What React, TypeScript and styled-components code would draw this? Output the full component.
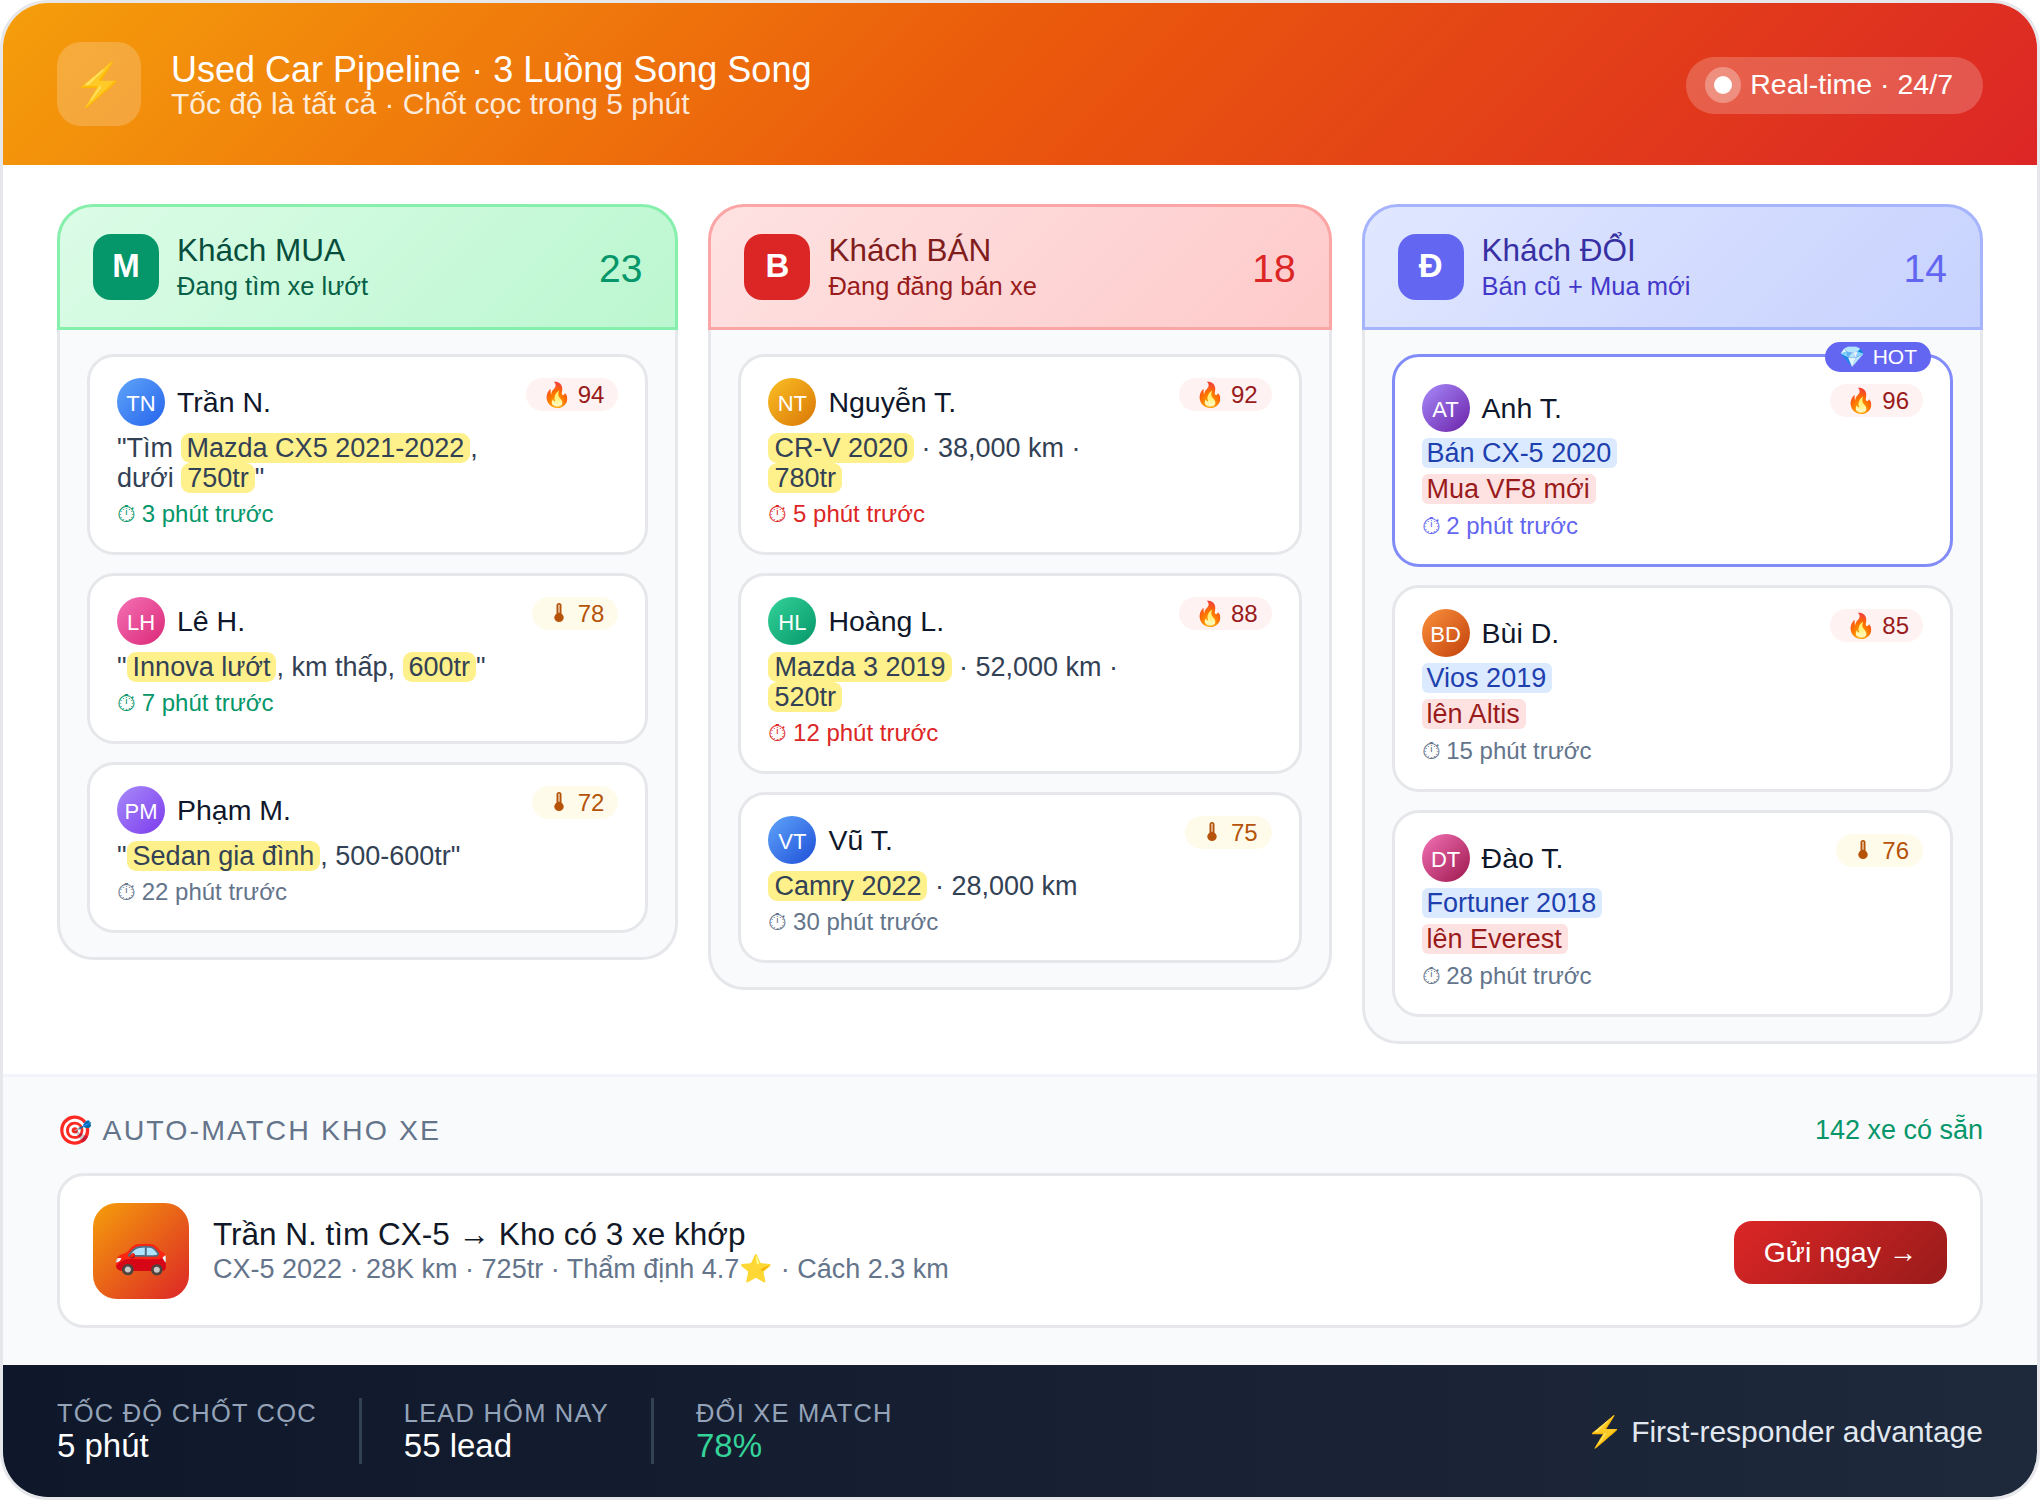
import React from "react";
import styled, { createGlobalStyle } from "styled-components";

const Global = createGlobalStyle`
  * { box-sizing: border-box; }
  html, body { margin: 0; padding: 0; background: #fff; }
  body { font-family: "Liberation Sans", Arial, sans-serif; }
`;

const Frame = styled.div`
  width: 2040px;
  height: 1500px;
  border: 3px solid #e5e7eb;
  border-radius: 48px;
  overflow: hidden;
  background: #fff;
  display: flex;
  flex-direction: column;
`;

const Header = styled.header`
  flex: none;
  height: 162px;
  padding: 0 54px;
  display: flex;
  align-items: center;
  gap: 30px;
  background: linear-gradient(135deg, #f59e0b 0%, #ea580c 50%, #dc2626 100%);
`;

const Bolt = styled.div`
  width: 84px;
  height: 84px;
  border-radius: 24px;
  background: rgba(255, 255, 255, 0.2);
  display: flex;
  align-items: center;
  justify-content: center;
  font-size: 42px;
`;

const HeaderText = styled.div`
  flex: 1;
  display: flex;
  flex-direction: column;
`;

const Title = styled.div`
  font-size: 36px;
  line-height: 40px;
  color: #fff;
`;

const Subtitle = styled.div`
  font-size: 30px;
  line-height: 30px;
  margin-top: -1px;
  color: rgba(255, 255, 255, 0.85);
`;

const LivePill = styled.div`
  height: 57px;
  margin-top: 3px;
  padding: 0 30px 2px 28px;
  border-radius: 30px;
  background: rgba(255, 255, 255, 0.2);
  display: flex;
  align-items: center;
  gap: 18px;
  color: #fff;
  font-size: 28.5px;
`;

const LiveDot = styled.span`
  width: 18px;
  height: 18px;
  border-radius: 50%;
  background: #fff;
  box-shadow: 0 0 0 9px rgba(255, 255, 255, 0.3);
`;

const Pipeline = styled.section`
  flex: 1;
  padding: 39px 54px 0;
  display: grid;
  grid-template-columns: 621.4px 623.2px 1fr;
  gap: 30px;
  align-items: start;
`;

type Tone = "buy" | "sell" | "swap";

const toneHead: Record<Tone, { a: string; b: string; border: string; title: string; sub: string; accent: string }> = {
  buy: { a: "#dcfce7", b: "#bbf7d0", border: "#86efac", title: "#064e3b", sub: "#065f46", accent: "#059669" },
  sell: { a: "#fee2e2", b: "#fecaca", border: "#fca5a5", title: "#7f1d1d", sub: "#991b1b", accent: "#dc2626" },
  swap: { a: "#e0e7ff", b: "#c7d2fe", border: "#a5b4fc", title: "#3730a3", sub: "#4338ca", accent: "#6366f1" },
};

const Column = styled.div`
  display: flex;
  flex-direction: column;
`;

const ColumnHead = styled.div<{ $tone: Tone }>`
  height: 126px;
  padding: 0 33px;
  display: flex;
  align-items: center;
  gap: 18px;
  border: 3px solid ${(p) => toneHead[p.$tone].border};
  border-radius: 36px 36px 0 0;
  background: linear-gradient(135deg, ${(p) => toneHead[p.$tone].a}, ${(p) => toneHead[p.$tone].b});
`;

const Letter = styled.div<{ $tone: Tone }>`
  width: 66px;
  height: 66px;
  padding-bottom: 2px;
  border-radius: 18px;
  background: ${(p) => toneHead[p.$tone].accent};
  color: #fff;
  font-size: 33px;
  font-weight: 700;
  display: flex;
  align-items: center;
  justify-content: center;
`;

const HeadText = styled.div`
  flex: 1;
  margin-top: -2px;
`;

const HeadTitle = styled.div<{ $tone: Tone }>`
  font-size: 31.5px;
  line-height: 40px;
  color: ${(p) => toneHead[p.$tone].title};
`;

const HeadSub = styled.div<{ $tone: Tone }>`
  font-size: 25.5px;
  line-height: 32px;
  color: ${(p) => toneHead[p.$tone].sub};
`;

const Count = styled.div<{ $tone: Tone }>`
  font-size: 39px;
  margin-top: 3px;
  color: ${(p) => toneHead[p.$tone].accent};
`;

const ColumnBody = styled.div`
  padding: 24px 27px 24px;
  display: flex;
  flex-direction: column;
  gap: 18px;
  background: #f9fafb;
  border: 3px solid #e5e7eb;
  border-top: 0;
  border-radius: 0 0 36px 36px;
`;

const Card = styled.article<{ $hot?: boolean }>`
  position: relative;
  padding: ${(p) => (p.$hot ? "27px 27px 23px" : "21px 27px 23px")};
  background: #fff;
  border: 3px solid ${(p) => (p.$hot ? "#818cf8" : "#e5e7eb")};
  border-radius: 27px;
`;

const HotBadge = styled.div`
  position: absolute;
  top: -15px;
  right: 19px;
  height: 30px;
  padding: 0 14px;
  border-radius: 15px;
  background: #6366f1;
  color: #fff;
  font-size: 21px;
  display: flex;
  align-items: center;
  gap: 8px;
`;

const CardHead = styled.div`
  display: flex;
  align-items: flex-start;
  justify-content: space-between;
  margin-bottom: 6px;
`;

const Person = styled.div`
  display: flex;
  align-items: center;
  gap: 12px;
`;

const Avatar = styled.div<{ $from: string; $to: string }>`
  width: 48px;
  height: 48px;
  border-radius: 50%;
  background: linear-gradient(135deg, ${(p) => p.$from}, ${(p) => p.$to});
  color: #fff;
  font-size: 22px;
  padding-top: 3px;
  display: flex;
  align-items: center;
  justify-content: center;
`;

const Name = styled.div`
  font-size: 28.5px;
  color: #0f172a;
`;

const Heat = styled.div<{ $warm?: boolean }>`
  height: 33px;
  padding: 0 14px 0 ${(p) => (p.$warm ? 22 : 16)}px;
  border-radius: 17px;
  background: ${(p) => (p.$warm ? "#fffbeb" : "#fef2f2")};
  color: ${(p) => (p.$warm ? "#b45309" : "#991b1b")};
  font-size: 24px;
  display: flex;
  align-items: center;
  gap: ${(p) => (p.$warm ? 14 : 6)}px;
`;

const ThermoIcon = styled.svg`
  width: 10px;
  height: 19px;
  margin-bottom: 3px;
  fill: currentColor;
`;

const Quote = styled.div`
  max-width: 380px;
  padding-top: 1px;
  font-size: 27px;
  line-height: 30px;
  color: #334155;
`;

const Mark = styled.span`
  padding: 0 6px;
  border-radius: 9px;
  background: #fef08a;
`;

const Tags = styled.div`
  display: flex;
  flex-direction: column;
  align-items: flex-start;
  gap: 6px;
  padding-bottom: 1px;
`;

const Tag = styled.span<{ $kind: "sell" | "buy" }>`
  height: 30px;
  line-height: 30px;
  padding: 0 6px 0 5px;
  border-radius: 6px;
  font-size: 27px;
  background: ${(p) => (p.$kind === "sell" ? "#dbeafe" : "#fee2e2")};
  color: ${(p) => (p.$kind === "sell" ? "#1e40af" : "#991b1b")};
`;

const Ago = styled.div<{ $color: string }>`
  margin-top: 6px;
  font-size: 24px;
  line-height: 30px;
  color: ${(p) => p.$color};
`;

const Clock = styled.span`
  margin-right: -1px;
`;

const MatchSection = styled.section`
  flex: none;
  height: 291px;
  padding: 7px 54px 0;
  background: #f9fafb;
  border-top: 3px solid #f1f5f9;
`;

const MatchHead = styled.div`
  height: 89px;
  padding-top: 3px;
  display: flex;
  align-items: center;
  justify-content: space-between;
`;

const MatchTitle = styled.div`
  font-size: 28.5px;
  letter-spacing: 2.1px;
  color: #64748b;
`;

const MatchCount = styled.div`
  font-size: 27px;
  margin-top: 1px;
  color: #059669;
`;

const MatchCard = styled.div`
  height: 155px;
  padding: 0 33px;
  display: flex;
  align-items: center;
  gap: 24px;
  background: #fff;
  border: 3px solid #e5e7eb;
  border-radius: 27px;
`;

const Thumb = styled.div`
  width: 96px;
  height: 96px;
  border-radius: 24px;
  background: linear-gradient(135deg, #f59e0b, #dc2626);
  display: flex;
  align-items: center;
  justify-content: center;
  font-size: 45px;
`;

const MatchText = styled.div`
  flex: 1;
`;

const MatchLine = styled.div`
  font-size: 31.5px;
  line-height: 36px;
  color: #111827;
`;

const MatchSub = styled.div`
  font-size: 27px;
  line-height: 33px;
  margin-top: 1px;
  color: #64748b;
`;

const SendButton = styled.button`
  width: 213px;
  height: 63px;
  margin-top: 3px;
  padding: 0;
  border: 0;
  border-radius: 18px;
  background: linear-gradient(135deg, #dc2626, #991b1b);
  color: #fff;
  font-family: inherit;
  font-size: 28.5px;
`;

const Footer = styled.footer`
  flex: none;
  height: 132px;
  padding: 0 54px;
  display: flex;
  align-items: center;
  gap: 42px;
  background: linear-gradient(90deg, #0f172a, #1e293b);
`;

const Stat = styled.div``;

const StatLabel = styled.div`
  font-size: 25.5px;
  line-height: 30px;
  letter-spacing: 1.2px;
  color: #94a3b8;
`;

const StatValue = styled.div<{ $green?: boolean }>`
  font-size: 33px;
  line-height: 36px;
  color: ${(p) => (p.$green ? "#34d399" : "#fff")};
`;

const Divider = styled.span`
  width: 3px;
  height: 66px;
  background: #334155;
`;

const Advantage = styled.div`
  margin-left: auto;
  font-size: 30px;
  color: #e2e8f0;
`;

type Lead = {
  initials: string;
  from: string;
  to: string;
  name: string;
  heat: number;
  warm?: boolean;
  body: React.ReactNode;
  ago: string;
  agoColor: string;
  hot?: boolean;
};

const grey = "#64748b";
const green = "#059669";
const red = "#dc2626";
const indigo = "#6366f1";

const buyers: Lead[] = [
  { initials: "TN", from: "#60a5fa", to: "#2563eb", name: "Trần N.", heat: 94, ago: "3 phút trước", agoColor: green,
    body: <Quote>"Tìm <Mark>Mazda CX5 2021-2022</Mark>, dưới <Mark>750tr</Mark>"</Quote> },
  { initials: "LH", from: "#f472b6", to: "#db2777", name: "Lê H.", heat: 78, warm: true, ago: "7 phút trước", agoColor: green,
    body: <Quote>"<Mark>Innova lướt</Mark>, km thấp, <Mark>600tr</Mark>"</Quote> },
  { initials: "PM", from: "#a78bfa", to: "#7c3aed", name: "Phạm M.", heat: 72, warm: true, ago: "22 phút trước", agoColor: grey,
    body: <Quote>"<Mark>Sedan gia đình</Mark>, 500-600tr"</Quote> },
];

const sellers: Lead[] = [
  { initials: "NT", from: "#fbbf24", to: "#d97706", name: "Nguyễn T.", heat: 92, ago: "5 phút trước", agoColor: red,
    body: <Quote><Mark>CR-V 2020</Mark> · 38,000 km · <Mark>780tr</Mark></Quote> },
  { initials: "HL", from: "#34d399", to: "#059669", name: "Hoàng L.", heat: 88, ago: "12 phút trước", agoColor: red,
    body: <Quote><Mark>Mazda 3 2019</Mark> · 52,000 km · <Mark>520tr</Mark></Quote> },
  { initials: "VT", from: "#60a5fa", to: "#1d4ed8", name: "Vũ T.", heat: 75, warm: true, ago: "30 phút trước", agoColor: grey,
    body: <Quote><Mark>Camry 2022</Mark> · 28,000 km</Quote> },
];

const swaps: Lead[] = [
  { initials: "AT", from: "#a78bfa", to: "#6b21a8", name: "Anh T.", heat: 96, hot: true, ago: "2 phút trước", agoColor: indigo,
    body: <Tags><Tag $kind="sell">Bán CX-5 2020</Tag><Tag $kind="buy">Mua VF8 mới</Tag></Tags> },
  { initials: "BD", from: "#fb923c", to: "#c2410c", name: "Bùi D.", heat: 85, ago: "15 phút trước", agoColor: grey,
    body: <Tags><Tag $kind="sell">Vios 2019</Tag><Tag $kind="buy">lên Altis</Tag></Tags> },
  { initials: "DT", from: "#f472b6", to: "#9d174d", name: "Đào T.", heat: 76, warm: true, ago: "28 phút trước", agoColor: grey,
    body: <Tags><Tag $kind="sell">Fortuner 2018</Tag><Tag $kind="buy">lên Everest</Tag></Tags> },
];

const columns: { tone: Tone; letter: string; title: string; sub: string; count: number; leads: Lead[] }[] = [
  { tone: "buy", letter: "M", title: "Khách MUA", sub: "Đang tìm xe lướt", count: 23, leads: buyers },
  { tone: "sell", letter: "B", title: "Khách BÁN", sub: "Đang đăng bán xe", count: 18, leads: sellers },
  { tone: "swap", letter: "Đ", title: "Khách ĐỔI", sub: "Bán cũ + Mua mới", count: 14, leads: swaps },
];

function Thermometer() {
  return (
    <ThermoIcon viewBox="0 0 10 19" aria-hidden="true">
      <rect x="2.5" y="0" width="5" height="15" rx="2.5" />
      <ellipse cx="5" cy="14.6" rx="4.7" ry="4.4" />
      <rect x="4.3" y="1.5" width="1.4" height="8.5" rx="0.7" fill="#fffbeb" opacity="0.75" />
    </ThermoIcon>
  );
}

function LeadCard({ lead }: { lead: Lead }) {
  return (
    <Card $hot={lead.hot}>
      {lead.hot && <HotBadge><span>💎</span><span>HOT</span></HotBadge>}
      <CardHead>
        <Person>
          <Avatar $from={lead.from} $to={lead.to}>{lead.initials}</Avatar>
          <Name>{lead.name}</Name>
        </Person>
        <Heat $warm={lead.warm}>
          {lead.warm ? <Thermometer /> : <span>🔥</span>}
          <span>{lead.heat}</span>
        </Heat>
      </CardHead>
      {lead.body}
      <Ago $color={lead.agoColor}><Clock>⏱</Clock> {lead.ago}</Ago>
    </Card>
  );
}

export default function App() {
  return (
    <Frame>
      <Global />
      <Header>
        <Bolt>⚡</Bolt>
        <HeaderText>
          <Title>Used Car Pipeline · 3 Luồng Song Song</Title>
          <Subtitle>Tốc độ là tất cả · Chốt cọc trong 5 phút</Subtitle>
        </HeaderText>
        <LivePill><LiveDot />Real-time · 24/7</LivePill>
      </Header>
      <Pipeline>
        {columns.map((c) => (
          <Column key={c.tone}>
            <ColumnHead $tone={c.tone}>
              <Letter $tone={c.tone}>{c.letter}</Letter>
              <HeadText>
                <HeadTitle $tone={c.tone}>{c.title}</HeadTitle>
                <HeadSub $tone={c.tone}>{c.sub}</HeadSub>
              </HeadText>
              <Count $tone={c.tone}>{c.count}</Count>
            </ColumnHead>
            <ColumnBody>
              {c.leads.map((l) => <LeadCard key={l.initials} lead={l} />)}
            </ColumnBody>
          </Column>
        ))}
      </Pipeline>
      <MatchSection>
        <MatchHead>
          <MatchTitle>🎯 AUTO-MATCH KHO XE</MatchTitle>
          <MatchCount>142 xe có sẵn</MatchCount>
        </MatchHead>
        <MatchCard>
          <Thumb>🚗</Thumb>
          <MatchText>
            <MatchLine>Trần N. tìm CX-5 → Kho có 3 xe khớp</MatchLine>
            <MatchSub>CX-5 2022 · 28K km · 725tr · Thẩm định 4.7⭐ · Cách 2.3 km</MatchSub>
          </MatchText>
          <SendButton>Gửi ngay →</SendButton>
        </MatchCard>
      </MatchSection>
      <Footer>
        <Stat><StatLabel>TỐC ĐỘ CHỐT CỌC</StatLabel><StatValue>5 phút</StatValue></Stat>
        <Divider />
        <Stat><StatLabel>LEAD HÔM NAY</StatLabel><StatValue>55 lead</StatValue></Stat>
        <Divider />
        <Stat><StatLabel>ĐỔI XE MATCH</StatLabel><StatValue $green>78%</StatValue></Stat>
        <Advantage>⚡ First-responder advantage</Advantage>
      </Footer>
    </Frame>
  );
}
